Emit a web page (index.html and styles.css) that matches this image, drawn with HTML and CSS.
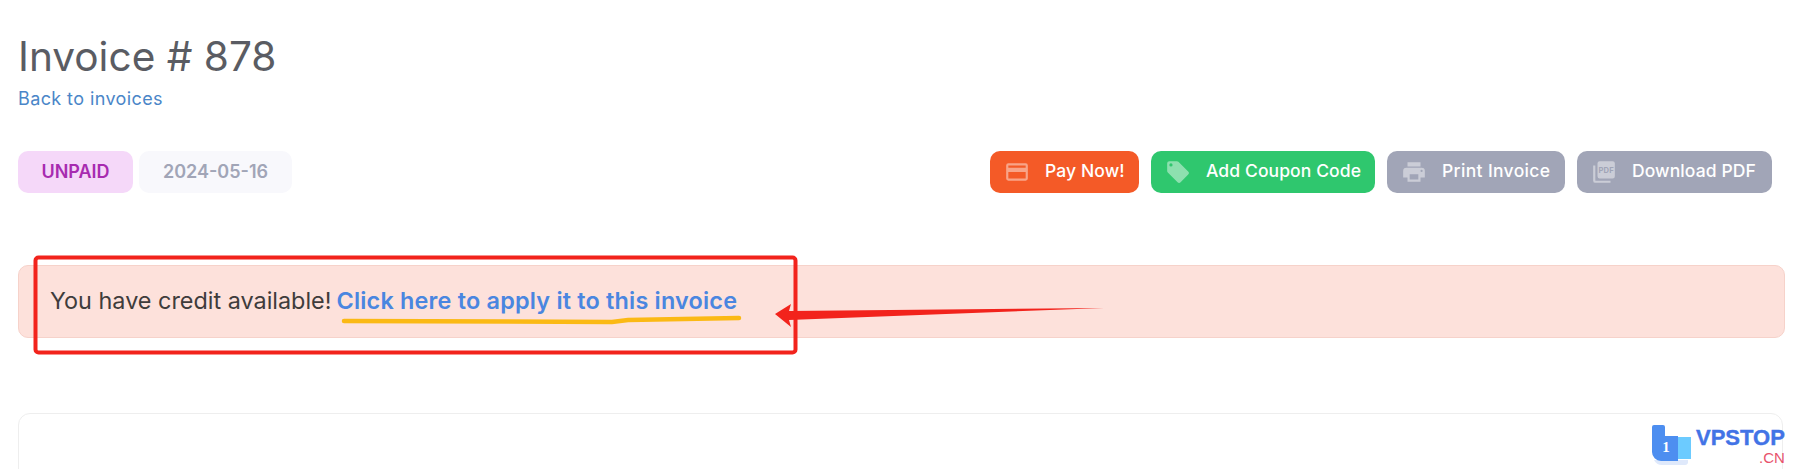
FILE: index.html
```html
<!DOCTYPE html>
<html lang="en">
<head>
    <meta charset="UTF-8">
    <meta name="viewport" content="width=device-width, initial-scale=1.0">
    <title>Invoice # 878</title>
    <link rel="stylesheet" href="styles.css">
</head>
<body>
    <div class="page">
        <!-- Heading -->
        <h1 class="title">Invoice # 878</h1>
        <a class="back-link" href="#">Back to invoices</a>

        <!-- Status and actions -->
        <div class="toolbar">
            <div class="badges">
                <span class="badge badge-unpaid">UNPAID</span>
                <span class="badge badge-date">2024-05-16</span>
            </div>
            <div class="actions">
                <a class="btn btn-pay" href="#">
                    <svg class="btn-icon" viewBox="0 0 24 24"><path fill="currentColor" d="M20 4H4a2 2 0 0 0-2 2v12a2 2 0 0 0 2 2h16a2 2 0 0 0 2-2V6a2 2 0 0 0-2-2zm0 14H4v-6h16v6zm0-10H4V6h16v2z"/></svg>
                    <span>Pay Now!</span>
                </a>
                <a class="btn btn-coupon" href="#">
                    <svg class="btn-icon" viewBox="0 0 24 24"><path fill="currentColor" d="M21.4 11.6l-9-9A2 2 0 0 0 11 2H4a2 2 0 0 0-2 2v7c0 .55.22 1.05.59 1.42l9 9a2 2 0 0 0 2.82 0l7-7a2 2 0 0 0-.01-2.82zM5.5 7A1.5 1.5 0 1 1 5.5 4a1.5 1.5 0 0 1 0 3z"/></svg>
                    <span>Add Coupon Code</span>
                </a>
                <a class="btn btn-print" href="#">
                    <svg class="btn-icon" viewBox="0 0 24 24"><path fill="currentColor" d="M19 8H5a3 3 0 0 0-3 3v6h4v4h12v-4h4v-6a3 3 0 0 0-3-3zm-3 11H8v-5h8v5zm3-7a1 1 0 1 1 0-2 1 1 0 0 1 0 2zM18 3H6v4h12V3z"/></svg>
                    <span>Print Invoice</span>
                </a>
                <a class="btn btn-pdf" href="#">
                    <svg class="btn-icon" viewBox="0 0 24 24"><path fill="currentColor" d="M20 2H8a2 2 0 0 0-2 2v12a2 2 0 0 0 2 2h12a2 2 0 0 0 2-2V4a2 2 0 0 0-2-2zM4 6H2v14a2 2 0 0 0 2 2h14v-2H4V6z"/><text class="pdf-mark" x="14" y="12.500" text-anchor="middle">PDF</text></svg>
                    <span>Download PDF</span>
                </a>
            </div>
        </div>

        <!-- Credit notice -->
        <div class="notice">
            <span>You have credit available!</span> <a class="notice-link" href="#">Click here to apply it to this invoice</a>
        </div>

        <div class="card"></div>
    </div>

    <!-- Annotations drawn over the screenshot -->
    <svg class="markup" width="1807" height="469" viewBox="0 0 1807 469">
        <rect x="35.500" y="257.500" width="760" height="95" rx="3" fill="none" stroke="#f2231c" stroke-width="4"/>
        <path d="M344 321 L612 322 L628 320 L739 318" fill="none" stroke="#fbb915" stroke-width="4.500" stroke-linecap="round"/>
        <path d="M775 314 L791 304 L789 311 L1104 308 L789 320 L791 327 Z" fill="#f2231c"/>
    </svg>

    <div class="watermark">
        <svg class="watermark-mark" viewBox="0 0 44 42">
            <path fill="#dfe9fb" d="M4 36h34v3a3 3 0 0 1-3 2H12a9 9 0 0 1-8-5z"/>
            <path fill="#6ccbff" d="M26 13h15v22H26z"/>
            <path fill="#4d8ef0" d="M2 3a2 2 0 0 1 2-2h9a2 2 0 0 1 2 2v9h13v25H11a9 9 0 0 1-9-9z"/>
            <text class="watermark-digit" x="16" y="28" text-anchor="middle">1</text>
        </svg>
        <div class="watermark-text">
            <span class="watermark-name">VPSTOP</span>
            <span class="watermark-tld">.CN</span>
        </div>
    </div>
</body>
</html>
```

FILE: styles.css
```css
/* styles.css */
body {
    font-family: Inter, "Noto Sans", Arial, sans-serif;
    background-color: white;
    margin: 0;
    position: relative;
}

a {
    text-decoration: none;
}

.page {
    height: 469px;
    box-sizing: border-box;
    overflow: hidden;
    padding: 33px 22px 0 18px;
}

.title {
    margin: 0;
    font-size: 40.600px;
    line-height: 47px;
    font-weight: 400;
    color: #5a5c63;
}

.back-link {
    display: block;
    margin-top: 8px;
    font-size: 18px;
    line-height: 22px;
    letter-spacing: 0.400px;
    color: #4a86c8;
}

.toolbar {
    display: flex;
    justify-content: space-between;
    margin-top: 41px;
    padding-right: 13px;
}

.badges,
.actions {
    display: flex;
}

.badges {
    gap: 6px;
}

.actions {
    gap: 12px;
}

.badge {
    display: flex;
    align-items: center;
    justify-content: center;
    height: 42px;
    box-sizing: border-box;
    padding-bottom: 2px;
    border-radius: 10px;
    font-size: 18px;
    font-weight: 600;
}

.badge-unpaid {
    width: 115px;
    background-color: #f5d8f9;
    color: #a72bb0;
}

.badge-date {
    width: 153px;
    background-color: #f8f8fc;
    color: #a1a5b7;
}

.btn {
    display: flex;
    align-items: center;
    height: 42px;
    padding: 0 0 4px 14px;
    box-sizing: border-box;
    border-radius: 10px;
    font-size: 17.500px;
    letter-spacing: 0.100px;
    font-weight: 500;
    color: white;
    white-space: nowrap;
}

.btn-icon {
    width: 26px;
    height: 26px;
    margin: 4px 15px 0 0;
    opacity: 0.45;
}

.btn-pay {
    width: 149px;
    background-color: #f45a27;
}

.btn-coupon {
    width: 224px;
    background-color: #2fc76e;
}

.btn-print {
    width: 178px;
    letter-spacing: 0.350px;
    background-color: #a1a5b7;
}

.btn-pdf {
    width: 195px;
    background-color: #a1a5b7;
}

.pdf-mark {
    font-size: 7px;
    font-weight: 700;
    fill: #a1a5b7;
}

.notice {
    display: flex;
    align-items: center;
    gap: 5px;
    height: 73px;
    box-sizing: border-box;
    margin-top: 72px;
    padding: 0 0 3px 31px;
    background-color: #fde1db;
    border: 1px solid #f6d2ca;
    border-radius: 10px;
    font-size: 23.400px;
    color: #3f3c3c;
}

.notice-link {
    font-weight: 600;
    letter-spacing: 0.210px;
    color: #4a86e0;
}

.card {
    height: 80px;
    margin-top: 75px;
    margin-right: 2px;
    border: 1px solid #eeeeee;
    border-radius: 12px;
}

.markup {
    position: absolute;
    top: 0;
    left: 0;
}

.watermark {
    position: absolute;
    left: 1650px;
    top: 424px;
    display: flex;
}

.watermark-mark {
    width: 44px;
    height: 42px;
}

.watermark-digit {
    font-family: "Liberation Serif", serif;
    font-size: 15px;
    font-weight: 700;
    fill: white;
}

.watermark-text {
    display: flex;
    flex-direction: column;
    align-items: flex-end;
    margin-left: 2px;
}

.watermark-name {
    font-family: "Liberation Sans", Arial, sans-serif;
    font-size: 22px;
    line-height: 25px;
    margin-top: 1px;
    font-weight: 700;
    color: #4273e6;
    -webkit-text-stroke: 0.400px #4273e6;
}

.watermark-tld {
    font-family: "Liberation Sans", Arial, sans-serif;
    font-size: 15px;
    line-height: 15px;
    color: #e8536b;
}
```
